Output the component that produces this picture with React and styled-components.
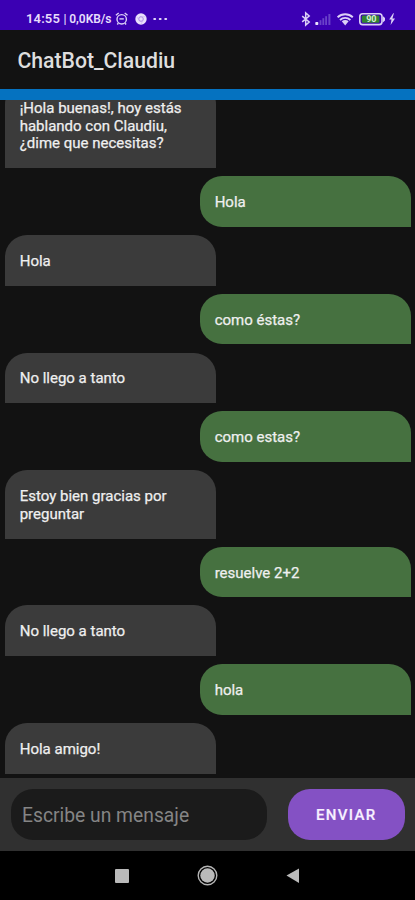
import React from 'react';
import styled, { createGlobalStyle, css } from 'styled-components';

const colors = {
  status: '#3b00b3',
  page: '#121212',
  accent: '#0572c0',
  bot: '#3b3b3b',
  user: '#467140',
  bar: '#303030',
  field: '#1b1b1b',
  send: '#8451c4',
  icon: '#dcd0f7',
};

const GlobalStyle = createGlobalStyle`
  * {
    box-sizing: border-box;
  }
  body {
    margin: 0;
    background: ${colors.page};
    font-family: Roboto, 'Liberation Sans', sans-serif;
  }
`;

const Screen = styled.div`
  display: flex;
  flex-direction: column;
  width: 415px;
  height: 900px;
  overflow: hidden;
  background: ${colors.page};
`;
const StatusBar = styled.div`
  display: flex;
  flex: none;
  align-items: center;
  justify-content: space-between;
  height: 30px;
  padding: 8px 18px 0 26px;
  background: ${colors.status};
  color: #e6dcfb;
`;
const StatusGroup = styled.div`
  display: flex;
  align-items: center;
  svg {
    display: block;
  }
`;
const Clock = styled.span`
  width: 89px;
  font-size: 13px;
  font-weight: 600;
  line-height: 16px;
  letter-spacing: 0.15px;
  white-space: nowrap;
`;
const Speed = styled.span`
  font-size: 12px;
  letter-spacing: -0.05px;
`;
const AppBar = styled.header`
  display: flex;
  flex: none;
  align-items: center;
  height: 58.5px;
  padding: 3px 17.5px 0;
`;
const Title = styled.h1`
  margin: 0;
  color: #dedede;
  font-size: 21.2px;
  font-weight: 500;
  line-height: 28px;
`;
const Divider = styled.div`
  flex: none;
  height: 11.5px;
  background: ${colors.accent};
`;
const Messages = styled.main`
  display: flex;
  flex: 1;
  flex-direction: column;
  justify-content: flex-end;
  gap: 8.1px;
  min-height: 0;
  padding: 0 3.7px 3.8px 4.7px;
  overflow: hidden;
`;
const Bubble = styled.div`
  flex: none;
  width: 211.7px;
  padding: 17.9px 15px 15px;
  color: #efefef;
  font-size: 15px;
  line-height: 17.8px;
  -webkit-text-stroke: 0.25px #efefef;
  ${({ $mine }) =>
    $mine
      ? css`
          align-self: flex-end;
          border-radius: 22px 22px 0 22px;
          background: ${colors.user};
        `
      : css`
          align-self: flex-start;
          border-radius: 22px 22px 0 0;
          background: ${colors.bot};
        `}
`;
const Composer = styled.form`
  display: flex;
  flex: none;
  align-items: center;
  justify-content: space-between;
  height: 73.5px;
  padding: 0 10px 0 11px;
  background: ${colors.bar};
`;
const Field = styled.input`
  width: 256px;
  height: 51px;
  padding: 2px 11px 0;
  border: 0;
  border-radius: 22px;
  outline: 0;
  background: ${colors.field};
  color: #efefef;
  font: 400 19.3px Roboto, 'Liberation Sans', sans-serif;
  &::placeholder {
    color: #858585;
    opacity: 1;
  }
`;
const Send = styled.button`
  width: 117.5px;
  height: 51.5px;
  padding: 2px 0 0;
  border: 0;
  border-radius: 22px;
  background: ${colors.send};
  color: #f7f0ff;
  font: 500 15px Roboto, 'Liberation Sans', sans-serif;
  letter-spacing: 1.35px;
  -webkit-text-stroke: 0.2px #f7f0ff;
`;
const NavBar = styled.nav`
  display: flex;
  flex: none;
  align-items: center;
  justify-content: center;
  height: 49px;
  background: #000;
  svg {
    display: block;
  }
`;

const messages = [
  { text: '¡Hola buenas!, hoy estás hablando con Claudiu, ¿dime que necesitas?' },
  { text: 'Hola', mine: true },
  { text: 'Hola' },
  { text: 'como éstas?', mine: true },
  { text: 'No llego a tanto' },
  { text: 'como estas?', mine: true },
  { text: 'Estoy bien gracias por preguntar' },
  { text: 'resuelve 2+2', mine: true },
  { text: 'No llego a tanto' },
  { text: 'hola', mine: true },
  { text: 'Hola amigo!' },
];

// alarm, browser and overflow dots
const LeftIcons = () => (
  <svg width="55" height="16" viewBox="0 0 55 16" fill="none" stroke={colors.icon}>
    <circle cx="6.7" cy="8.3" r="4.7" strokeWidth="1.4" />
    <path d="M0.9 4.3 3.7 2M9.7 2l2.8 2.3M3.3 12.2l-1 1.3M10.1 12.2l1 1.3" strokeWidth="1.4" />
    <path d="M4.4 7.9h4.4" strokeWidth="1.4" />
    <circle cx="26" cy="8" r="5.7" fill="#e9e0fc" stroke="none" />
    <circle cx="26" cy="8" r="2.3" stroke="#a98ae2" strokeWidth="1" />
    <path d="M26 5.7h4.5M24.1 9.2l-2.3-3.5M28 9.2l-2 4" stroke="#c8b5ef" strokeWidth="0.7" />
    <g fill="#e0d5f8" stroke="none">
      <rect x="38.3" y="6.9" width="2.8" height="2.2" rx="0.8" />
      <rect x="43.8" y="6.9" width="2.8" height="2.2" rx="0.8" />
      <rect x="49.3" y="6.9" width="2.8" height="2.2" rx="0.8" />
    </g>
  </svg>
);

// bluetooth, signal, wifi, battery and charging bolt
const RightIcons = () => (
  <svg width="97" height="16" viewBox="300 0 97 16" fill="none">
    <path
      d="M302.2 5.1l7 5.9-3.5 3.1V1.9l3.5 3.1-7 5.9"
      stroke={colors.icon}
      strokeWidth="1.5"
    />
    <rect x="315.3" y="11" width="3" height="3" rx="0.7" fill="#ece4fd" />
    <g fill="#6a42c9">
      <rect x="319.6" y="9.2" width="1.8" height="4.8" />
      <rect x="322.4" y="7.2" width="1.8" height="6.8" />
      <rect x="325.2" y="5.2" width="1.8" height="8.8" />
      <rect x="328.4" y="3" width="2" height="11" />
    </g>
    <path
      d="M337.6 6.2c4.4-4 10.8-4 15.2 0M340 9c3-2.8 7.4-2.8 10.4 0"
      stroke={colors.icon}
      strokeWidth="1.9"
    />
    <path d="M341.8 10.2c2-1.7 4.8-1.7 6.8 0l-3.4 4.2z" fill={colors.icon} />
    <rect x="359.8" y="2.8" width="22.2" height="10.8" rx="2.8" stroke={colors.icon} strokeWidth="1.6" />
    <path d="M382.8 5l2.2 2v2.6l-2.2 2z" fill={colors.icon} />
    <rect x="361.8" y="4.6" width="17.6" height="7.2" rx="0.8" fill="#328332" />
    <text
      x="371.3"
      y="11.4"
      fill="#d8efd2"
      fontFamily="Roboto, sans-serif"
      fontSize="9"
      fontWeight="700"
      textAnchor="middle"
    >
      90
    </text>
    <path d="M393.2 2.3l-4 6.3h2.3l-0.9 5.4 4.4-6.6h-2.6l1.5-5.1z" fill={colors.icon} />
  </svg>
);

const NavIcons = () => (
  <svg width="415" height="49" viewBox="0 0 415 49">
    <rect x="115" y="18" width="14" height="14" rx="1" fill="#bababa" />
    <circle cx="207.5" cy="24.5" r="9.3" fill="none" stroke="#b4b4b4" strokeWidth="1.4" />
    <circle cx="207.5" cy="24.5" r="7.2" fill="#bababa" />
    <path d="M286.5 24.5 299 17.5v14.5z" fill="#bababa" />
  </svg>
);

const App = () => (
  <>
    <GlobalStyle />
    <Screen>
      <StatusBar>
        <StatusGroup>
          <Clock>
            14:55 <Speed>| 0,0KB/s</Speed>
          </Clock>
          <LeftIcons />
        </StatusGroup>
        <StatusGroup>
          <RightIcons />
        </StatusGroup>
      </StatusBar>
      <AppBar>
        <Title>ChatBot_Claudiu</Title>
      </AppBar>
      <Divider />
      <Messages>
        {messages.map((message, i) => (
          <Bubble key={i} $mine={message.mine}>
            {message.text}
          </Bubble>
        ))}
      </Messages>
      <Composer onSubmit={e => e.preventDefault()}>
        <Field placeholder="Escribe un mensaje" />
        <Send type="submit">ENVIAR</Send>
      </Composer>
      <NavBar>
        <NavIcons />
      </NavBar>
    </Screen>
  </>
);

export default App;
